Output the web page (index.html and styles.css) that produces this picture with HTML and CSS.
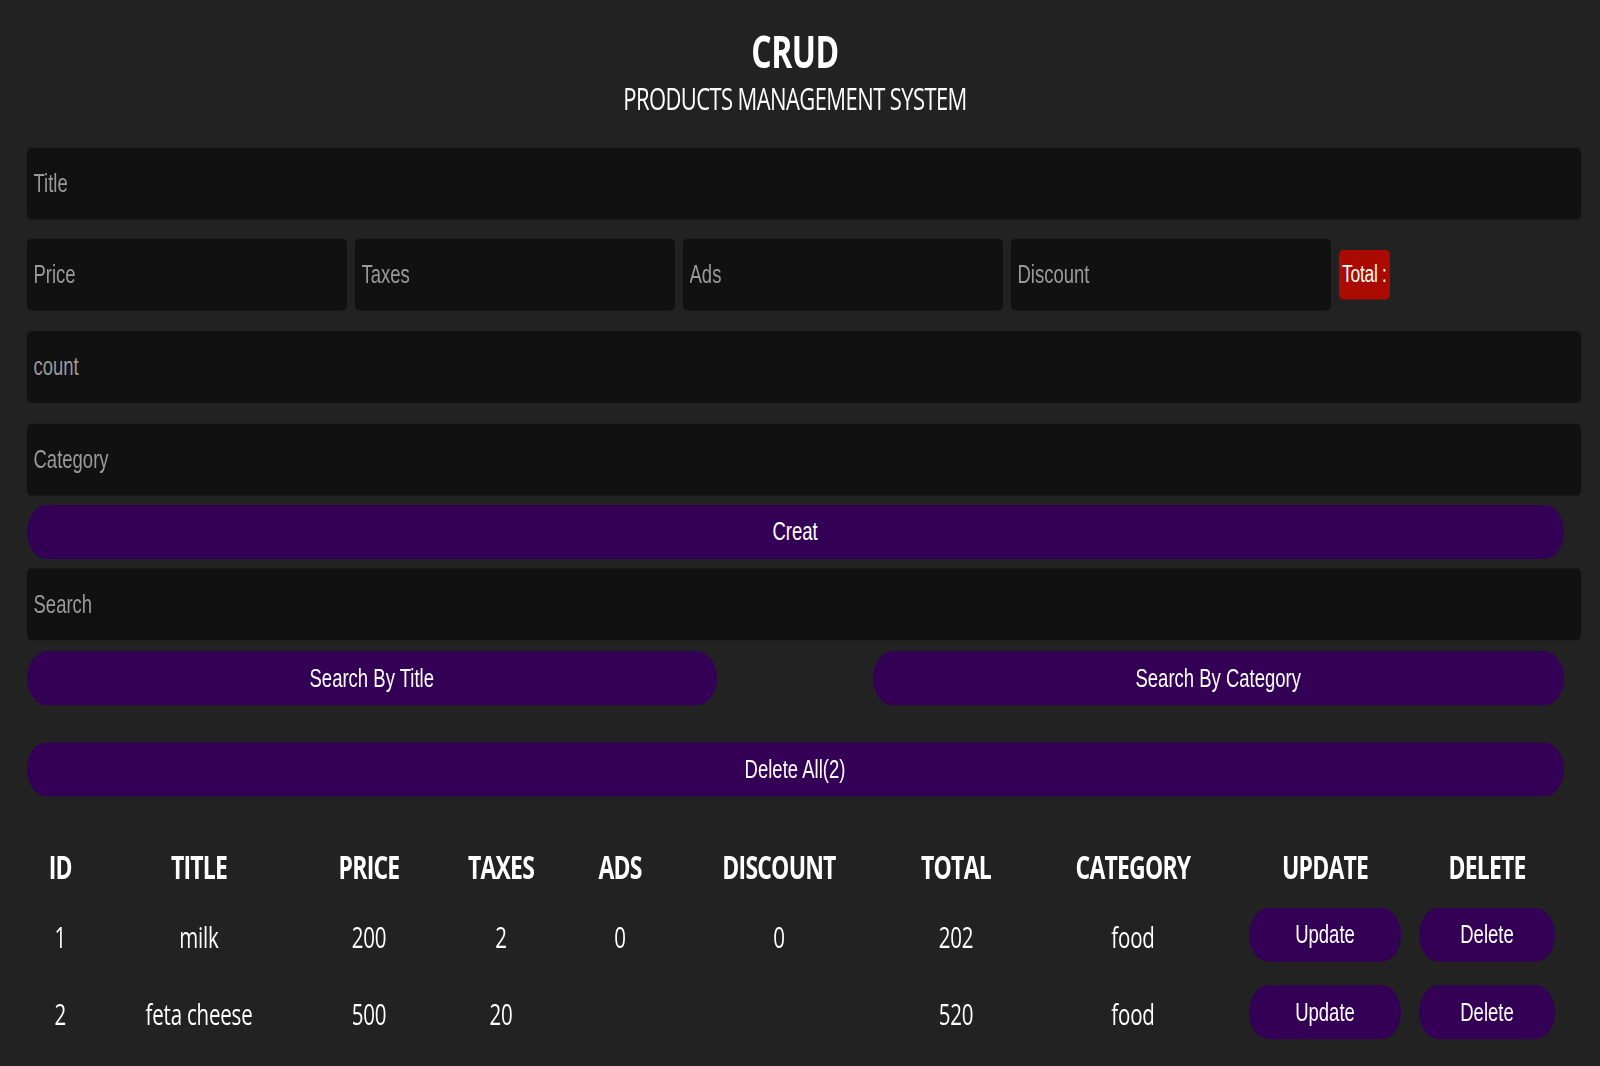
FILE: index.html
```html
<!DOCTYPE html>
<html lang="en">
<head>
<meta charset="utf-8">
<title>CRUD</title>
<link rel="stylesheet" href="styles.css">
</head>
<body>
<div class="page">
  <header class="head">
    <h1 class="head-title">CRUD</h1>
    <p class="head-sub">PRODUCTS MANAGEMENT SYSTEM</p>
  </header>

  <section class="inputs">
    <input class="field field-title" type="text" placeholder="Title">
    <div class="price-row">
      <input class="field field-price" type="number" placeholder="Price">
      <input class="field field-price" type="number" placeholder="Taxes">
      <input class="field field-price" type="number" placeholder="Ads">
      <input class="field field-price" type="number" placeholder="Discount">
      <small class="total">Total :</small>
    </div>
    <input class="field field-count" type="number" placeholder="count">
    <input class="field field-category" type="text" placeholder="Category">
    <button class="btn btn-create">Creat</button>
  </section>

  <section class="search-block">
    <input class="field field-search" type="text" placeholder="Search">
    <div class="search-btns">
      <button class="btn btn-search">Search By Title</button>
      <button class="btn btn-search">Search By Category</button>
    </div>
  </section>

  <div class="delete-all">
    <button class="btn">Delete All(2)</button>
  </div>

  <table class="products">
    <colgroup>
      <col class="c-id"><col class="c-title"><col class="c-price"><col class="c-taxes"><col class="c-ads">
      <col class="c-discount"><col class="c-total"><col class="c-category"><col class="c-update"><col class="c-delete">
    </colgroup>
    <thead>
      <tr>
        <th>ID</th><th>TITLE</th><th>PRICE</th><th>TAXES</th><th>ADS</th>
        <th>DISCOUNT</th><th>TOTAL</th><th>CATEGORY</th><th>UPDATE</th><th>DELETE</th>
      </tr>
    </thead>
    <tbody>
      <tr>
        <td>1</td><td>milk</td><td>200</td><td>2</td><td>0</td><td>0</td><td>202</td><td>food</td>
        <td class="act"><button class="btn btn-row">Update</button></td>
        <td class="act"><button class="btn btn-row">Delete</button></td>
      </tr>
      <tr>
        <td>2</td><td>feta cheese</td><td>500</td><td>20</td><td></td><td></td><td>520</td><td>food</td>
        <td class="act"><button class="btn btn-row">Update</button></td>
        <td class="act"><button class="btn btn-row">Delete</button></td>
      </tr>
    </tbody>
  </table>
</div>
</body>
</html>
```

FILE: styles.css
```css
html {
  background: #222222;
}

body {
  margin: 0;
  padding: 0;
  min-height: 100vh;
  background: #222222;
  color: #ffffff;
}

/* the reference is rendered with a vertical stretch of ~1.38 */
.page {
  display: flow-root;
  width: 1537px;
  margin-left: 26.5px;
  padding-top: 15.5px;
  transform: scaleY(1.38);
  transform-origin: 0 0;
  font-family: "Liberation Sans", Arial, sans-serif;
}

.head {
  text-align: center;
}

.head-title {
  margin: 0;
  font-family: "Open Sans", "Noto Sans", sans-serif;
  font-weight: 700;
  font-size: 32px;
  line-height: 42px;
  letter-spacing: -0.5px;
}

.head-sub {
  margin: -1.5px 0 0;
  font-family: "Open Sans", "Noto Sans", sans-serif;
  font-weight: 400;
  font-size: 22px;
  line-height: 30px;
  letter-spacing: -0.6px;
}

.inputs {
  display: flex;
  flex-direction: column;
  margin-top: 20.5px;
}

.field {
  box-sizing: border-box;
  display: block;
  height: 52px;
  width: calc(100% + 17px);
  margin: 0;
  padding: 0 7px;
  border: none;
  outline: none;
  border-radius: 4px;
  background: #111111;
  color: #ffffff;
  font-family: "Liberation Sans", Arial, sans-serif;
  font-size: 18.5px;
}

.field::placeholder {
  color: #9a9a9a;
}

.field::-webkit-outer-spin-button,
.field::-webkit-inner-spin-button {
  -webkit-appearance: none;
  margin: 0;
}

.price-row {
  display: flex;
  align-items: center;
  gap: 7.5px;
  margin-top: 14.3px;
}

.price-row .field-price {
  width: 320.5px;
  flex: none;
}

.total {
  display: flex;
  align-items: center;
  box-sizing: border-box;
  height: 36px;
  padding: 0 3.5px;
  border-radius: 4px;
  background: #aa0a00;
  color: #ffffff;
  font-size: 17.5px;
  letter-spacing: -0.3px;
}

.field-count {
  margin-top: 15.4px;
}

.field-category {
  margin-top: 14.5px;
}

.btn {
  box-sizing: border-box;
  display: block;
  width: 100%;
  height: 39px;
  margin: 0;
  padding: 0;
  border: none;
  border-radius: 20px;
  background: #330055;
  color: #ffffff;
  font-family: "Liberation Sans", Arial, sans-serif;
  font-size: 18.5px;
  cursor: pointer;
}

.btn-create {
  margin-top: 7px;
}

.search-block {
  margin-top: 7.6px;
}

.search-btns {
  display: flex;
  justify-content: space-between;
  margin-top: 8px;
}

.btn-search {
  width: 690.5px;
}

.delete-all {
  margin-top: 26.8px;
}

.products {
  width: 1537.5px;
  margin-top: 27.5px;
  border-collapse: collapse;
  table-layout: fixed;
  text-align: center;
  font-family: "Open Sans", "Noto Sans", sans-serif;
}

.c-id { width: 67.5px; }
.c-title { width: 210px; }
.c-price { width: 130px; }
.c-taxes { width: 134px; }
.c-ads { width: 104px; }
.c-discount { width: 214px; }
.c-total { width: 140px; }
.c-category { width: 214px; }
.c-update { width: 170px; }
.c-delete { width: 154px; }

.products th {
  height: 46px;
  padding: 0;
  font-size: 23px;
  font-weight: 700;
  letter-spacing: -0.8px;
}

.products td {
  height: 56.5px;
  padding: 0;
  font-size: 20.5px;
  font-weight: 400;
  letter-spacing: -0.2px;
}

.products td.act {
  padding: 0 9px;
}

.btn-row {
  width: 100%;
  margin-bottom: 3px;
}
```
